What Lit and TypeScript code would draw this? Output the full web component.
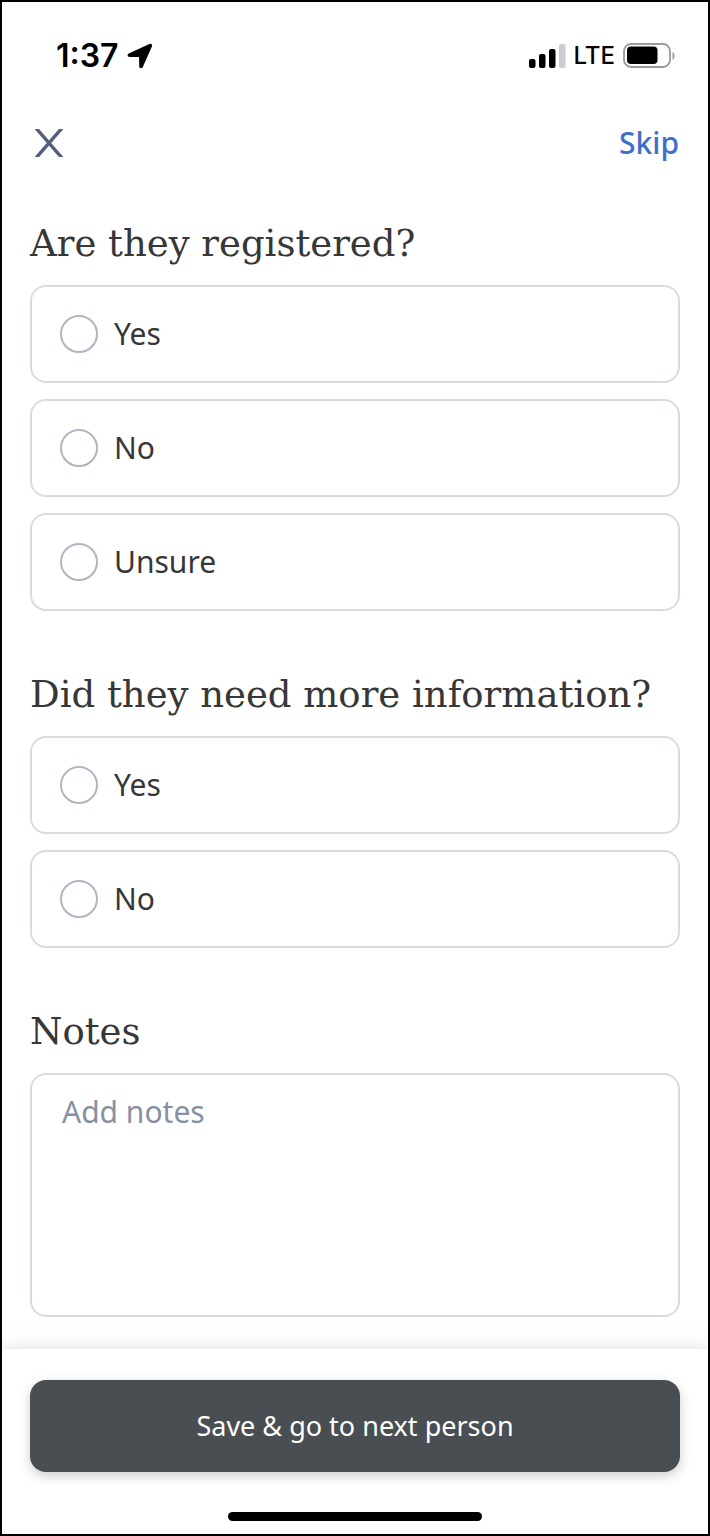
import { LitElement, html, css } from "lit";
import { customElement, property } from "lit/decorators.js";

@customElement("status-bar")
class StatusBar extends LitElement {
  static styles = css`
    :host {
      display: flex;
      align-items: center;
      justify-content: space-between;
      padding: 36px 32px 0 54px;
      height: 36px;
      color: #000;
    }
    .group {
      display: flex;
      align-items: center;
      gap: 8px;
    }
    .time {
      font: 600 32px/36px Inter, sans-serif;
    }
    .network {
      font: 500 24px/36px Inter, sans-serif;
    }
    svg {
      display: block;
    }
  `;

  render() {
    return html`
      <div class="group">
        <span class="time">1:37</span>
        <svg width="26" height="26" viewBox="0 0 26 26" aria-hidden="true">
          <path d="M1.700 10.600 22.400 1c1.700-.8 3.200.7 2.500 2.400L15.800 24c-.9 1.900-3.600 1.400-3.600-.8l-.1-8.200c0-.7-.3-1-1-1l-8.300-.1c-2.300 0-3-2.400-1.100-3.300Z" />
        </svg>
      </div>
      <div class="group">
        <svg width="37" height="24" viewBox="0 0 37 24" aria-hidden="true">
          <rect x="0" y="15" width="6.500" height="9" rx="2" />
          <rect x="10" y="10" width="6.500" height="14" rx="2" />
          <rect x="20" y="5" width="6.500" height="19" rx="2" />
          <rect x="30" y="0" width="6.500" height="24" rx="2" fill="#ccc" />
        </svg>
        <span class="network">LTE</span>
        <svg width="53" height="26" viewBox="0 0 53 26" aria-hidden="true">
          <rect x="1" y="1" width="46" height="23" rx="7" fill="none" stroke="#9a9a9a" stroke-width="1.800" />
          <rect x="4" y="3.500" width="30.500" height="17.500" rx="4" />
          <path d="M49.500 9c2.700 1.300 2.700 6.700 0 8Z" fill="#999" />
        </svg>
      </div>
    `;
  }
}

@customElement("radio-question")
class RadioQuestion extends LitElement {
  @property() heading = "";
  @property() name = "";
  @property({ type: Array }) options: string[] = [];

  static styles = css`
    :host {
      display: block;
    }
    .question {
      margin: 0;
      padding: 0;
      border: 0;
      min-width: 0;
      display: flex;
      flex-direction: column;
      gap: 16px;
    }
    .heading {
      padding: 0;
      margin-bottom: 10px;
      font: 400 37px/62px "DejaVu Serif", serif;
      color: #373737;
    }
    .option {
      display: flex;
      align-items: center;
      gap: 16px;
      box-sizing: border-box;
      height: 98px;
      padding: 0 28px;
      border: 2px solid #d9dbe1;
      border-radius: 16px;
      font-size: 30px;
      line-height: 40px;
      color: #373737;
    }
    .radio {
      appearance: none;
      box-sizing: border-box;
      width: 38px;
      height: 38px;
      margin: 0;
      border: 2px solid #b0b5c3;
      border-radius: 50%;
      background: #fff;
    }
    .radio:checked {
      border: 11px solid #3e6fcb;
    }
  `;

  render() {
    return html`
      <fieldset class="question">
        <legend class="heading">${this.heading}</legend>
        ${this.options.map(
          (option) => html`
            <label class="option">
              <input class="radio" type="radio" name=${this.name} value=${option} />
              <span>${option}</span>
            </label>
          `
        )}
      </fieldset>
    `;
  }
}

@customElement("app-root")
class AppRoot extends LitElement {
  static styles = css`
    :host {
      display: flex;
      flex-direction: column;
      box-sizing: border-box;
      min-height: 100vh;
      border: 2px solid #000;
      background: #fff;
      font-family: "Noto Sans", sans-serif;
      color: #373737;
    }
    .toolbar {
      display: flex;
      align-items: center;
      justify-content: space-between;
      height: 60px;
      margin-top: 39px;
      padding: 0 29px 0 33px;
    }
    .close {
      display: block;
      padding: 0;
      border: 0;
      background: none;
      cursor: pointer;
    }
    .close svg {
      display: block;
    }
    .skip {
      font-size: 30px;
      line-height: 40px;
      font-weight: 500;
      color: #3e6fcb;
      text-decoration: none;
    }
    .content {
      flex: 1;
      display: flex;
      flex-direction: column;
      gap: 53px;
      padding: 40px 28px 32px;
    }
    .notes {
      display: flex;
      flex-direction: column;
      gap: 10px;
    }
    .heading {
      font: 400 37px/62px "DejaVu Serif", serif;
    }
    .input {
      display: block;
      box-sizing: border-box;
      width: 100%;
      height: 244px;
      margin: 0;
      padding: 17px 30px;
      border: 2px solid #d9dbe1;
      border-radius: 16px;
      background: #fff;
      font: 400 30px/40px "Noto Sans", sans-serif;
      color: #373737;
      resize: none;
    }
    .input::placeholder {
      color: #8790a3;
      opacity: 1;
    }
    .footer {
      position: sticky;
      bottom: 0;
      display: flex;
      flex-direction: column;
      align-items: center;
      gap: 40px;
      padding: 31px 28px 13px;
      background: #fff;
      box-shadow: 0 0 12px rgba(0, 0, 0, 0.1), 0 -10px 30px rgba(0, 0, 0, 0.03);
      clip-path: inset(-50px 0 0 0);
    }
    .save {
      width: 100%;
      height: 92px;
      padding: 0;
      border: 0;
      border-radius: 16px;
      background: #494e52;
      box-shadow: 0 4px 12px rgba(0, 0, 0, 0.2);
      font: 400 27px/36px "Noto Sans", sans-serif;
      color: #fff;
      cursor: pointer;
    }
    .home {
      width: 39%;
      height: 9px;
      border-radius: 5px;
      background: #000;
    }
  `;

  render() {
    return html`
      <status-bar></status-bar>
      <nav class="toolbar">
        <button class="close" aria-label="Close">
          <svg width="28" height="28" viewBox="0 0 28 28" fill="none" stroke="#535f7b" stroke-width="3.400">
            <path d="M1-1 27 29M27-1 1 29" />
          </svg>
        </button>
        <a class="skip" href="#skip">Skip</a>
      </nav>
      <main class="content">
        <radio-question
          heading="Are they registered?"
          name="registered"
          .options=${["Yes", "No", "Unsure"]}
        ></radio-question>
        <radio-question
          heading="Did they need more information?"
          name="information"
          .options=${["Yes", "No"]}
        ></radio-question>
        <div class="notes">
          <label class="heading" for="notes">Notes</label>
          <textarea class="input" id="notes" placeholder="Add notes"></textarea>
        </div>
      </main>
      <footer class="footer">
        <button class="save">Save &amp; go to next person</button>
        <div class="home"></div>
      </footer>
    `;
  }
}
